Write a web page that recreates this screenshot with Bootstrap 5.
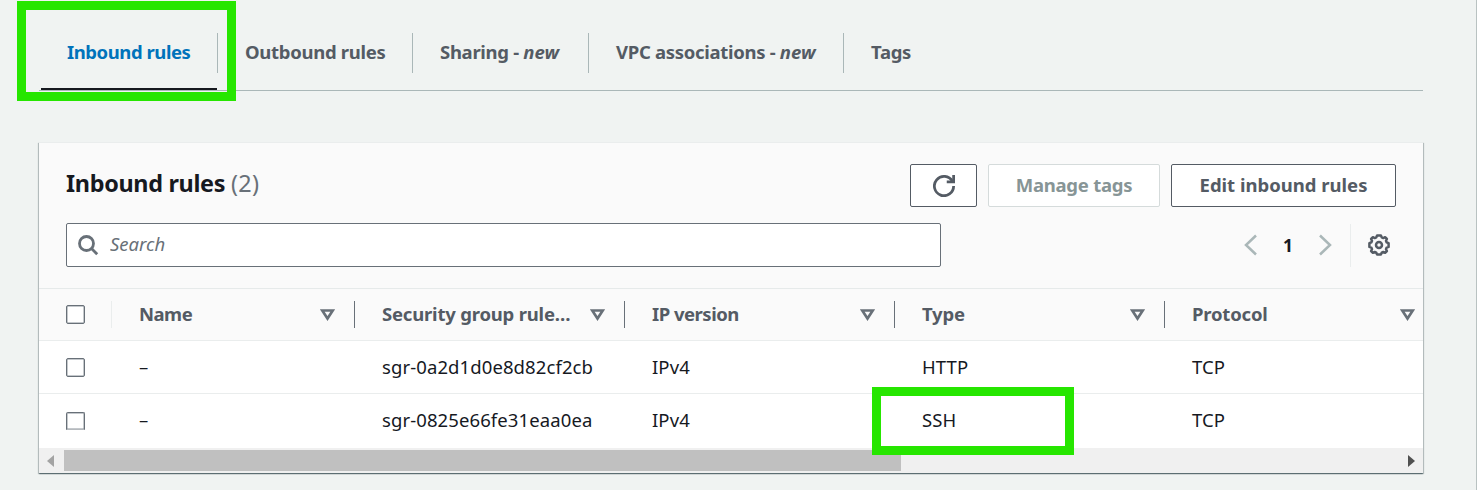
<!DOCTYPE html>
<html lang="en">
<head>
<meta charset="utf-8">
<title>Inbound rules</title>
<link href="https://cdn.jsdelivr.net/npm/bootstrap@5.3.0/dist/css/bootstrap.min.css" rel="stylesheet">
<style>
  body { background: #fff; font-family: "Noto Sans", sans-serif; font-size: 18.5px; line-height: 28px; color: #16191f; height: 490px; overflow: hidden; }
  .page-shell { height: 490px; width: 1477px; background: #f0f3f2; border-right: 1px solid #b9c2c2; padding: 13px 53px 0 39px; }
  .tab-strip { height: 78px; border-bottom: 1px solid #aab7b8; padding-left: 2px; font-weight: 700; color: #545b64; }
  .tab-strip .nav-link { position: relative; height: 77px; padding: 25px 0 0 27px; color: inherit; white-space: nowrap; letter-spacing: -.3px; border-radius: 0; }
  .tab-strip .nav-link::after { content: ""; position: absolute; right: 0; top: 20px; width: 1px; height: 40px; background: #aab7b8; }
  .tab-strip .nav-link.plain::after { display: none; }
  .tab-strip .nav-link.active { color: #0073bb; padding-left: 26px; letter-spacing: -.44px; }
  .tab-strip .nav-link.active::before { content: ""; position: absolute; left: 0; right: 1px; bottom: 0; height: 2px; background: #16191f; }
  .tab-strip em { letter-spacing: 0; }
  .w-in { width: 177px; } .w-out { width: 195px; } .w-share { width: 176px; } .w-vpc { width: 255px; } .w-tags { width: 100px; }
  .marker-box { position: absolute; border: 9px solid #26e600; z-index: 5; pointer-events: none; }
  .mark-tab { left: 17px; top: 1px; width: 219px; height: 100px; }
  .mark-ssh { left: -23px; top: -7px; width: 202px; height: 68px; }
  .panel { margin-top: 51px; height: 331px; width: 1384px; background: #fff; box-shadow: 0 1px 1px 0 rgba(0,28,36,.4), 1px 1px 1px 0 rgba(0,28,36,.2), -1px 1px 1px 0 rgba(0,28,36,.2); border-top: 1px solid #eaeded; }
  .panel-top { height: 146px; background: #fafafa; border-bottom: 1px solid #e6eaea; padding: 21px 27px 0; }
  .panel-title { font-size: 23.4px; font-weight: 700; letter-spacing: -.32px; line-height: 38px; margin: 0; }
  .panel-title span { font-weight: 400; color: #687078; letter-spacing: .3px; }
  .act { height: 43px; border: 1px solid #545b64; border-radius: 2px; background: #fff; color: #545b64; font-size: 18.5px; font-weight: 700; line-height: 28px; padding: 0 0 2px; white-space: nowrap; }
  .act-refresh { width: 67px; padding: 0; } .act-tags { width: 172px; letter-spacing: -.25px; } .act-edit { width: 225px; }
  .act:disabled { opacity: 1; background: #fff; color: #879596; border-color: #d5dbdb; }
  .find { width: 875px; height: 44px; border: 1px solid #687078; border-radius: 2px; background: #fff; padding-left: 11px; }
  .find input { border: 0; outline: 0; font-style: italic; padding: 0 0 2px 3px; letter-spacing: 0; background: transparent; }
  .find input::placeholder { color: #687078; opacity: 1; }
  .pager-end { border-left: 1px solid #eaeded; height: 43px; width: 46px; padding: 0 0 1px 17px; }
  .pager { gap: 25px; margin-right: 18px; padding-bottom: 1px; }
  .page-no { font-size: 17.5px; font-weight: 700; width: 12px; text-align: center; line-height: 26px; }
  .grid-clip { height: 159px; overflow-x: clip; overflow-y: visible; }
  .rules { table-layout: fixed; width: 1396px; border-collapse: separate; border-spacing: 0; }
  .rules .c-check { width: 73px; } .rules .c-name { width: 243px; } .rules .c-data { width: 270px; }
  .rules th, .rules td { padding: 0 0 0 27px; white-space: nowrap; position: relative; border-bottom: 1px solid #eaeded; }
  .rules th { height: 52px; padding-bottom: 2px; background: #fafafa; color: #545b64; font-weight: 700; letter-spacing: -.2px; }
  .rules th:first-child { padding-bottom: 0; }
  .rules th.snug { letter-spacing: -.5px; }
  .rules th::after { content: ""; position: absolute; right: 0; top: 12px; width: 1px; height: 27px; background: #687078; }
  .rules th:first-child::after { background: #eaeded; }
  .rules th svg { position: absolute; right: 20px; top: 20px; }
  .rules td { height: 53px; letter-spacing: .1px; }
  .rules tbody tr:last-child td { height: 54px; border-bottom: 0; padding-bottom: 2px; }
  .box { display: block; width: 19px; height: 19px; border: 1px solid #687078; border-radius: 2px; background: #fff; box-shadow: inset 0 0 0 .5px #8a9299; }
  .box-cut { height: 18px; border-bottom-color: #b5b9bd; border-radius: 2px 2px 0 0; margin-top: 2px; }
  .scroller { height: 25px; background: #f0f0f0; padding: 0 8px; }
  .thumb { background: #c0c0c0; width: 837px; height: 21px; margin-left: 10px; }
</style>
</head>
<body>
<div class="page-shell position-relative">
  <div class="marker-box mark-tab"></div>
  <nav class="nav tab-strip flex-nowrap">
    <a class="nav-link active w-in">Inbound rules</a>
    <a class="nav-link w-out">Outbound rules</a>
    <a class="nav-link w-share">Sharing - <em>new</em></a>
    <a class="nav-link w-vpc">VPC associations - <em>new</em></a>
    <a class="nav-link plain w-tags">Tags</a>
  </nav>

  <section class="panel">
    <div class="panel-top">
      <div class="d-flex justify-content-between">
        <h2 class="panel-title">Inbound rules <span>(2)</span></h2>
        <div class="d-flex" style="gap:11px">
          <button class="act act-refresh d-flex align-items-center justify-content-center" aria-label="Refresh">
            <svg width="22" height="22" viewBox="0 0 16 16" fill="none" stroke="#545b64" stroke-width="2"><path d="M10 5h5V0"/><path d="M15 8a7 7 0 1 1-.9-3.400"/></svg>
          </button>
          <button class="act act-tags" disabled>Manage tags</button>
          <button class="act act-edit">Edit inbound rules</button>
        </div>
      </div>
      <div class="d-flex justify-content-between mt-3">
        <div class="find d-flex align-items-center">
          <svg width="21" height="21" viewBox="0 0 21 21" fill="none" stroke="#687078" stroke-width="2.8"><circle cx="8.500" cy="8.500" r="7"/><path d="M13.500 13.500l5.700 5.700"/></svg>
          <input class="flex-grow-1 ms-2" type="text" placeholder="Search">
        </div>
        <div class="d-flex align-items-center">
          <div class="pager d-flex align-items-center">
            <svg width="13" height="22" viewBox="0 0 13 22" fill="none" stroke="#aab7b8" stroke-width="2.5"><path d="M12 1.500L2 11l10 9.500"/></svg>
            <span class="page-no">1</span>
            <svg width="13" height="22" viewBox="0 0 13 22" fill="none" stroke="#aab7b8" stroke-width="2.5"><path d="M1 1.500L11 11 1 20.500"/></svg>
          </div>
          <div class="pager-end d-flex align-items-center">
            <svg width="22" height="22" viewBox="-11 -11 22 22" fill="none" stroke="#545b64" stroke-width="2.500" class="flex-shrink-0"><circle r="3"/><path stroke-linejoin="round" d="M-1.900-9.600H1.900L2.700-7.600 4.300-6.900 6.100-7.800 7.900-6 7-4.200 7.600-2.700 9.600-1.900V1.900L7.600 2.700 7 4.200 7.900 6 6.100 7.800 4.300 6.900 2.700 7.600 1.900 9.600H-1.900L-2.700 7.600-4.300 6.900-6.100 7.800-7.900 6-7 4.200-7.600 2.700-9.600 1.900V-1.900L-7.600-2.700-7-4.200-7.900-6-6.100-7.800-4.300-6.900-2.700-7.600Z"/></svg>
          </div>
        </div>
      </div>
    </div>

    <div class="grid-clip">
      <table class="rules">
        <colgroup><col class="c-check"><col class="c-name"><col class="c-data"><col class="c-data"><col class="c-data"><col class="c-data"></colgroup>
        <thead><tr>
          <th><span class="box"></span></th>
          <th class="snug">Name<svg width="15" height="12" viewBox="0 0 15 12" fill="none" stroke="#687078" stroke-width="2.700"><path d="M2.200 1.500h10.600L7.500 9.500z"/></svg></th>
          <th>Security group rule…<svg width="15" height="12" viewBox="0 0 15 12" fill="none" stroke="#687078" stroke-width="2.700"><path d="M2.200 1.500h10.600L7.500 9.500z"/></svg></th>
          <th class="snug">IP version<svg width="15" height="12" viewBox="0 0 15 12" fill="none" stroke="#687078" stroke-width="2.700"><path d="M2.200 1.500h10.600L7.500 9.500z"/></svg></th>
          <th>Type<svg width="15" height="12" viewBox="0 0 15 12" fill="none" stroke="#687078" stroke-width="2.700"><path d="M2.200 1.500h10.600L7.500 9.500z"/></svg></th>
          <th>Protocol<svg width="15" height="12" viewBox="0 0 15 12" fill="none" stroke="#687078" stroke-width="2.700"><path d="M2.200 1.500h10.600L7.500 9.500z"/></svg></th>
        </tr></thead>
        <tbody>
          <tr><td><span class="box"></span></td><td>–</td><td>sgr-0a2d1d0e8d82cf2cb</td><td>IPv4</td><td>HTTP</td><td>TCP</td></tr>
          <tr><td><span class="box box-cut"></span></td><td>–</td><td>sgr-0825e66fe31eaa0ea</td><td>IPv4</td><td>SSH<div class="marker-box mark-ssh"></div></td><td>TCP</td></tr>
        </tbody>
      </table>
    </div>
    <div class="scroller d-flex align-items-center">
      <svg width="7" height="12" viewBox="0 0 7 12"><path d="M7 0v12L0 6z" fill="#a3a3a3"/></svg>
      <div class="thumb"></div>
      <svg class="ms-auto" width="7" height="12" viewBox="0 0 7 12"><path d="M0 0v12l7-6z" fill="#505050"/></svg>
    </div>
  </section>
</div>
<script src="https://cdn.jsdelivr.net/npm/bootstrap@5.3.0/dist/js/bootstrap.bundle.min.js"></script>
</body>
</html>
